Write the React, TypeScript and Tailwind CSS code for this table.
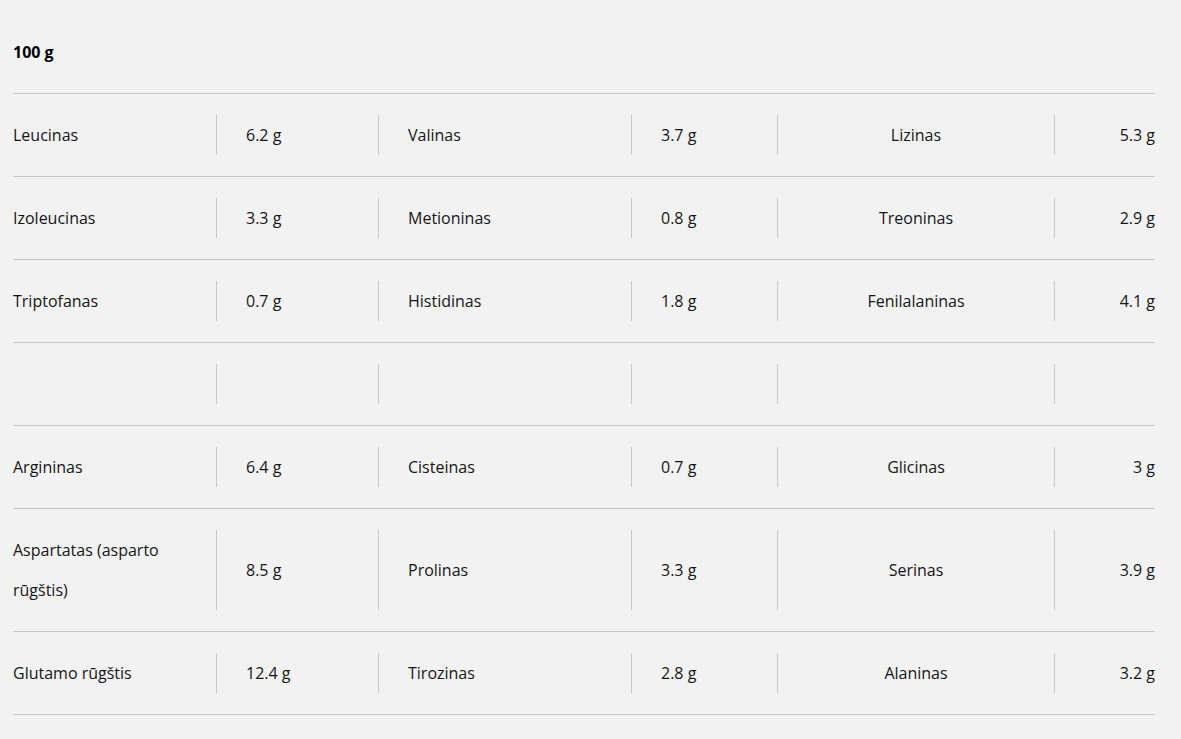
import React from 'react';

const rows: string[][] = [
  ['Leucinas', '6.2 g', 'Valinas', '3.7 g', 'Lizinas', '5.3 g'],
  ['Izoleucinas', '3.3 g', 'Metioninas', '0.8 g', 'Treoninas', '2.9 g'],
  ['Triptofanas', '0.7 g', 'Histidinas', '1.8 g', 'Fenilalaninas', '4.1 g'],
  ['', '', '', '', '', ''],
  ['Argininas', '6.4 g', 'Cisteinas', '0.7 g', 'Glicinas', '3 g'],
  ['Aspartatas (asparto rūgštis)', '8.5 g', 'Prolinas', '3.3 g', 'Serinas', '3.9 g'],
  ['Glutamo rūgštis', '12.4 g', 'Tirozinas', '2.8 g', 'Alaninas', '3.2 g'],
];

// per-column alignment / padding
const cellStyles = [
  'pr-4 text-left',
  'border-l border-[#c8c8c8] pl-[29px] text-left',
  'border-l border-[#c8c8c8] pl-[29px] text-left',
  'border-l border-[#c8c8c8] pl-[29px] text-left',
  'border-l border-[#c8c8c8] text-center justify-center',
  'border-l border-[#c8c8c8] text-right justify-end',
];

export default function App() {
  return (
    <div
      className="min-h-screen bg-[#f2f2f2] text-[#161616] pt-[11px] pl-[13px]"
      style={{ fontFamily: '"Open Sans", sans-serif' }}
    >
      <div className="w-[1142px]">
        {/* Header */}
        <div className="py-[21px] leading-[40px] text-base font-bold text-black">100 g</div>

        {/* Table */}
        <div className="border-t border-[#c8c8c8]">
          {rows.map((row, i) => (
            <div
              key={i}
              className="grid grid-cols-[203px_162px_253px_146px_277px_101px] border-b border-[#c8c8c8] py-[21px]"
            >
              {row.map((cell, j) => (
                <div
                  key={j}
                  className={`${cellStyles[j]} flex items-center text-base leading-[40px] min-h-[40px]`}
                >
                  <span>{cell}</span>
                </div>
              ))}
            </div>
          ))}
        </div>
      </div>
    </div>
  );
}
